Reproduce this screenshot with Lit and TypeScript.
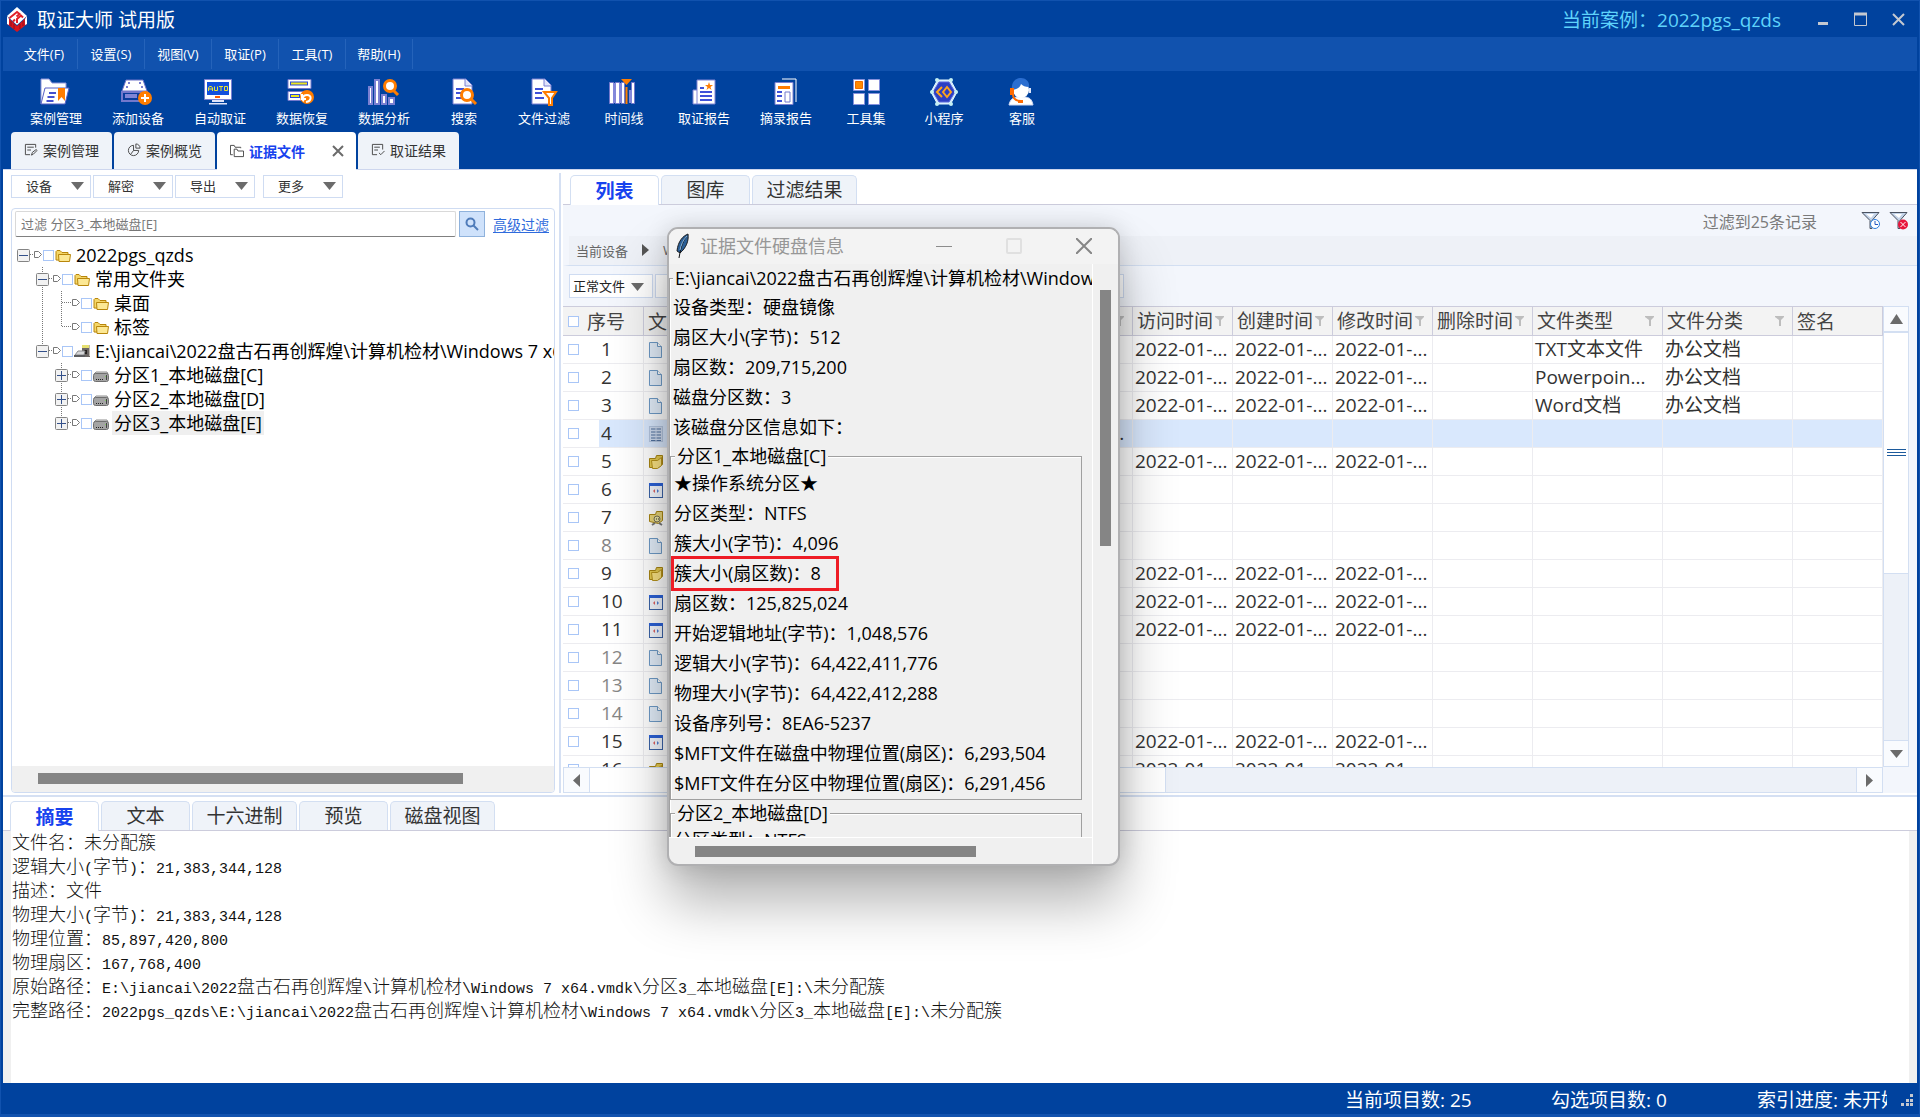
import { LitElement, html, svg, css, nothing, TemplateResult } from "lit";
import { customElement } from "lit/decorators.js";
import { classMap } from "lit/directives/class-map.js";

/* ---------- Toolbar icons, 30 x 28 ---------- */
const toolIcons: Record<string, TemplateResult> = {
  folder: svg`<path d="M0 26V1h8l3 4h14v5" fill="#fff" stroke="#8f95dc"/><path d="M4 10h24l-4 16H0z" fill="#fff" stroke="#5960c4"/><path d="M8 15h7M6.500 19h7M5.500 23h7" stroke="#4450d0" stroke-width="2"/><path d="M17 10h7v13l-3.500-4-3.500 4z" fill="#ff7d00"/>`,
  drive: svg`<g transform="translate(-2 0)"><path d="M5 2h17l4 11H1z" fill="#fff" stroke="#6d72c8"/><path d="M1 14h25v9H1z" fill="#0a3c9c" stroke="#7378cc" stroke-width="2"/><path d="M4 18h12" stroke="#8085d6" stroke-width="4"/><g fill="#4d55c0"><circle cx="8" cy="5" r="1"/><circle cx="19" cy="5" r="1"/><circle cx="6" cy="9" r="1"/><circle cx="21" cy="9" r="1"/></g><circle cx="24" cy="20" r="7" fill="#ff7d00"/><path d="M24 16v8M20 20h8" stroke="#fff" stroke-width="2"/></g>`,
  auto: svg`<g transform="translate(-2 0)"><path d="M1.500 1.500h27v20h-27z" fill="#fff" stroke="#7b80d2"/><path d="M4 4h22v13H4z" fill="#1250dc"/><g stroke="#e8e430" fill="none"><path d="M5.500 13v-3l1-1.500h2l1 1.500v3M5.500 11h4M11.500 8.500v4h3v-4M16 8.500h4M18 8.500V13M21.500 8.500h3v4h-3z"/></g><path d="M12 19h5" stroke="#ff5a00" stroke-width="2"/><path d="M9 22h12v2H9zM6 25h18v1.500H6z" fill="#dfe4fa"/></g>`,
  recover: svg`<g transform="translate(-2 0)"><path d="M3 1.500h23v9H3z" fill="#fff" stroke="#7378cc" stroke-width="1"/><path d="M5 5.500h18" stroke="#2c48d8" stroke-width="4"/><path d="M6 5.500h16" stroke="#eee71e" stroke-width="2"/><path d="M3 13.500h20v9H3z" fill="#fff" stroke="#7378cc" stroke-width="1"/><path d="M5 18h10" stroke="#2c48d8" stroke-width="4"/><path d="M6 18h8" stroke="#eee71e" stroke-width="2"/><circle cx="22" cy="19" r="7" fill="#ff7d00"/><path d="M21 24c6-1 6-7 1-7s-5 5-3 6M17 16v5h4" fill="none" stroke="#fff" stroke-width="2"/></g>`,
  chart: svg`<g transform="translate(-2 0)"><g fill="#fff" stroke="#7b80d2" stroke-width="2"><path d="M2 9h3v17H2zM8 2h4v24H8zM15 17h4v9h-4zM22 20h5v6h-5z"/></g><circle cx="23" cy="8" r="5.500" fill="#fff" stroke="#ff7d00" stroke-width="3"/><path d="m26 12 5 5" stroke="#ff7d00" stroke-width="3"/></g>`,
  search: svg`<path d="M4 1h13l6 6v19H4z" fill="#fff" stroke="#7b80d2"/><path d="M16 1v7h7" fill="#dfe3fa" stroke="#7b80d2"/><path d="M7 11h8M7 15h6M7 20h7" stroke="#3f51d8" stroke-width="2"/><circle cx="18" cy="17" r="5.500" fill="#fff" stroke="#ff7d00" stroke-width="3"/><path d="M22 21l5 5" stroke="#ff7d00" stroke-width="3"/>`,
  filter: svg`<path d="M3 1h13l6 6v19H3z" fill="#fff" stroke="#7b80d2"/><path d="M15 1v7h7" fill="#dfe3fa" stroke="#7b80d2"/><path d="M6 11h8M6 15h7M6 20h9" stroke="#3f51d8" stroke-width="2"/><path d="M15 14h12l-4 6v7h-3v-7z" fill="#fff" stroke="#ff7d00" stroke-width="2"/>`,
  timeline: svg`<g transform="translate(-2 0)"><g fill="#fff" stroke="#7378cc"><path d="M2.500 4.500h4v21h-4zM8.500 4.500h4v21h-4zM14.500 4.500h3v21h-3zM24.500 4.500h3v21h-3z"/></g><path d="M6 5h3v20H6zM12 5h3v20h-3zM22 12h3v13h-3z" fill="#8388da"/><path d="M14 1h11l-5.500 6z" fill="#ff7d00"/><path d="M19.500 9v17" stroke="#ff7d00" stroke-width="2"/></g>`,
  report: svg`<path d="M8 2h18v24H4V12h4z" fill="#fff" stroke="#8085d4"/><path d="M8 12v14" stroke="#8085d4"/><path d="M11 10h4M11 14h12M11 18h12M11 22h12" stroke="#3f51d8" stroke-width="2"/><path d="m20 4 1 3h3l-2.500 2 1 3-2.500-2-2.500 2 1-3L16 7h3z" fill="#ff7d00"/>`,
  excerpt: svg`<path d="M11 1h14v23" fill="none" stroke="#fff" stroke-width="1"/><path d="M4 4.500h18v22H4z" fill="#fff" stroke="#7b80d2"/><path d="M7 9.500h12" stroke="#ff7d00" stroke-width="3"/><path d="M6 14h5M6 18h5M6 23h5" stroke="#3f51d8" stroke-width="2"/><path d="M14 14h5v10h-5z" fill="#fff" stroke="#7378cc"/>`,
  tools: svg`<g fill="#fff" stroke="#8590dc"><path d="M2.500 1.500h11v11h-11zM17.500 1.500h11v11h-11zM2.500 15.500h11v11h-11zM17.500 15.500h11v11h-11z"/></g><path d="M4.500 3.500h7v7h-7z" fill="#ff8a00" stroke="#f06c00"/>`,
  applet: svg`<path d="M8.500 2h13L28 14l-6.500 12h-13L2 14z" fill="#d4eeff" stroke="#e4f6ff" stroke-width="1"/><path d="M10 4h10l6 10-6 10H10L4 14z" fill="#2c3fc4" stroke="#5a68da"/><path d="m13 9-5 5 5 5M14 14l4-5 4 5-4 5z" fill="none" stroke="#ffa41c" stroke-width="2"/><g fill="#c4f0f4"><circle cx="8" cy="2" r="2"/><circle cx="22" cy="2" r="2"/><circle cx="3" cy="14" r="2"/><circle cx="27" cy="14" r="2"/><circle cx="8" cy="26" r="2"/><circle cx="22" cy="26" r="2"/></g>`,
  service: svg`<path d="M2 27c1-6 5-8 9-8h6c5 0 8 2 9 8z" fill="#fff" stroke="#cdd8f4"/><circle cx="14" cy="12" r="8" fill="#fff"/><path d="M5 12C4 3 9 0 14 0s9 4 8 9c-4 0-6-1-8-3-1 4-4 5-9 6z" fill="#2b6ed0"/><path d="M3 10h4v7H3z" fill="#ff6a00"/><path d="M22 10h2v5h-2z" fill="#dfe6fa"/><path d="M6 16c0 5 3 7 8 7" fill="none" stroke="#ff6a00" stroke-width="2"/><path d="M11 22h5v3h-5z" fill="#ff6a00"/>`,
};

/* ---------- Small glyphs ---------- */
const arrowDown = html`<svg class="arrow" width="13" height="8" viewBox="0 0 13 8"><path d="M0 0h13L6.500 8z" fill="#6b6b6b" /></svg>`;
const funnel = html`<svg class="funnel" width="9" height="10" viewBox="0 0 9 10"><path d="M0 0h9v1L6 4v6H4V4L0 1z" fill="#bdbdbd" /></svg>`;

const folderIcon = html`<svg width="16" height="16" viewBox="0 0 16 16"><path d="M1 12V3.500l1-1h3l2 2h6v8z" fill="#f4d668" stroke="#b8860b" /><path d="M3.500 6.500h12l-1 7H4z" fill="#fce894" stroke="#b8860b" /></svg>`;
const imageIcon = html`<svg width="16" height="16" viewBox="0 0 16 16"><path d="M8 1h8v12H8z" fill="#6b6664" /><path d="M8 1h7v3H8z" fill="#e6e070" /><path d="M10 6h3v4h-3z" fill="#25211f" /><path d="M15 1h1v11h-1z" fill="#bdb8b0" /><path d="m1 11 3-4h7l-1 4z" fill="#d6d7d9" stroke="#8a8b8d" /><path d="M0 11h11v2H0z" fill="#5c5d60" /></svg>`;
const volumeIcon = html`<svg width="16" height="16" viewBox="0 0 16 16"><path d="m1 6 2-2h11l1 2z" fill="#d8d8d8" stroke="#8f8f8f" /><rect x="0.500" y="5.500" width="15" height="8" rx="2" fill="#a4a4a4" stroke="#6f6f6f" /><path d="M3 11.500h7" stroke="#222" stroke-dasharray="1 1" /><path d="M13 7h1v5h-1z" fill="#444" /><path d="M12 8h1v1h-1z" fill="#7fd060" /></svg>`;

const fileIcons: Record<string, TemplateResult> = {
  doc: html`<svg width="16" height="18" viewBox="0 0 16 18"><path d="M1.500 1.500h8l4 4v11h-12z" fill="#e4effb" stroke="#6f9cc8" /><path d="M9.500 1.500v4h4" fill="#fff" stroke="#6f9cc8" /></svg>`,
  cluster: html`<svg width="16" height="18" viewBox="0 0 16 18"><rect x="1.500" y="1.500" width="13" height="15" fill="#cfdcf0" stroke="#b4c6e0" /><path d="M3 4h4.500M8.500 4H13M3 7h4.500M8.500 7H13M3 10h4.500M8.500 10H13M3 13h4.500M8.500 13H13M3 15.500h4.500M8.500 15.500H13" stroke="#51719f" /></svg>`,
  dir: html`<svg width="16" height="18" viewBox="0 0 16 18"><path d="M1.500 14.500v-9h6l1-3h6v9l-4 3z" fill="#e6cb50" stroke="#a98614" /><path d="m4.500 15.500-1-8h6l4-3v8l-4 3z" fill="#fbe484" stroke="#b8941c" /></svg>`,
  exe: html`<svg width="16" height="18" viewBox="0 0 16 18"><rect x="1.500" y="2.500" width="13" height="14" fill="#f4f8ff" stroke="#3c64a8" /><path d="M1 3.500h14" stroke="#2c62d8" stroke-width="3" /><path d="m7 8-2 2 2 2z" fill="#e06060" /><path d="m9 8 2 2-2 2z" fill="#5080d8" /></svg>`,
  lost: html`<svg width="16" height="18" viewBox="0 0 16 18"><path d="M1.500 12.500v-7h6l1-3h6v9l-4 3z" fill="#e8d578" stroke="#a98614" /><circle cx="9" cy="10" r="3" fill="#f0e8a0" stroke="#77715a" /><path d="M8 10h1m1 0h1" stroke="#333" /><path d="m4 16 3-2m4 0 3 2" stroke="#77797c" stroke-width="2" /></svg>`,
};

const tabIcons: Record<string, TemplateResult> = {
  edit: svg`<path d="M12.500 5V1.500h-11v11h5M3.500 4.500h7M3.500 7.500h4M8 13l1-3 4-3 1 1-4 4z"/>`,
  pie: svg`<path d="M7 2.500a5.500 5.500 0 1 0 5.500 5.500H7zM9.500 1v4.500H14C14 3 12 1 9.500 1zM7 8l-3 4"/>`,
  files: svg`<path d="M3 11.500H.500v-10h4l1 2h6v1M4.500 13.500v-8h3l1 2h6v6z"/>`,
  result: svg`<path d="M12.500 7V1.500h-11v11h5M3.500 4.500h6M3.500 7.500h4M8.500 10.500l2 2 4-4"/>`,
};

const menus = ["文件(F)", "设置(S)", "视图(V)", "取证(P)", "工具(T)", "帮助(H)"];

const tools: [string, string][] = [
  ["案例管理", "folder"], ["添加设备", "drive"], ["自动取证", "auto"], ["数据恢复", "recover"],
  ["数据分析", "chart"], ["搜索", "search"], ["文件过滤", "filter"], ["时间线", "timeline"],
  ["取证报告", "report"], ["摘录报告", "excerpt"], ["工具集", "tools"], ["小程序", "applet"], ["客服", "service"],
];

const pageTabs = [
  { label: "案例管理", icon: "edit" },
  { label: "案例概览", icon: "pie" },
  { label: "证据文件", icon: "files", active: true },
  { label: "取证结果", icon: "result" },
];

interface TreeRow {
  label: string;
  depth: number;
  icon: TemplateResult;
  toggle?: "+" | "-";
  trunk?: boolean;
  last?: boolean;
  selected?: boolean;
}

const tree: TreeRow[] = [
  { label: "2022pgs_qzds", depth: 0, icon: folderIcon, toggle: "-", last: true },
  { label: "常用文件夹", depth: 1, icon: folderIcon, toggle: "-" },
  { label: "桌面", depth: 2, icon: folderIcon, trunk: true },
  { label: "标签", depth: 2, icon: folderIcon, trunk: true, last: true },
  { label: "E:\\jiancai\\2022盘古石再创辉煌\\计算机检材\\Windows 7 x64.vmdk", depth: 1, icon: imageIcon, toggle: "-", last: true },
  { label: "分区1_本地磁盘[C]", depth: 2, icon: volumeIcon, toggle: "+" },
  { label: "分区2_本地磁盘[D]", depth: 2, icon: volumeIcon, toggle: "+" },
  { label: "分区3_本地磁盘[E]", depth: 2, icon: volumeIcon, toggle: "+", last: true, selected: true },
];

interface FileRow {
  icon: string;
  dated?: boolean;
  type?: string;
  category?: string;
  dim?: boolean;
  selected?: boolean;
}

const files: FileRow[] = [
  { icon: "doc", dated: true, type: "TXT文本文件", category: "办公文档" },
  { icon: "doc", dated: true, type: "Powerpoin...", category: "办公文档" },
  { icon: "doc", dated: true, type: "Word文档", category: "办公文档" },
  { icon: "cluster", selected: true },
  { icon: "dir", dated: true },
  { icon: "exe" },
  { icon: "lost" },
  { icon: "doc", dim: true },
  { icon: "dir", dated: true },
  { icon: "exe", dated: true },
  { icon: "exe", dated: true },
  { icon: "doc", dim: true },
  { icon: "doc", dim: true },
  { icon: "doc", dim: true },
  { icon: "exe", dated: true },
  { icon: "dir", dated: true },
];

const details = [
  "文件名：未分配簇",
  "逻辑大小(字节)：21,383,344,128",
  "描述：文件",
  "物理大小(字节)：21,383,344,128",
  "物理位置：85,897,420,800",
  "物理扇区：167,768,400",
  "原始路径：E:\\jiancai\\2022盘古石再创辉煌\\计算机检材\\Windows 7 x64.vmdk\\分区3_本地磁盘[E]:\\未分配簇",
  "完整路径：2022pgs_qzds\\E:\\jiancai\\2022盘古石再创辉煌\\计算机检材\\Windows 7 x64.vmdk\\分区3_本地磁盘[E]:\\未分配簇",
];

const diskLines = ["设备类型：硬盘镜像", "扇区大小(字节)：512", "扇区数：209,715,200", "磁盘分区数：3", "该磁盘分区信息如下："];
const partitionLines = [
  "★操作系统分区★",
  "分区类型：NTFS",
  "簇大小(字节)：4,096",
  "簇大小(扇区数)：8",
  "扇区数：125,825,024",
  "开始逻辑地址(字节)：1,048,576",
  "逻辑大小(字节)：64,422,411,776",
  "物理大小(字节)：64,422,412,288",
  "设备序列号：8EA6-5237",
  "$MFT文件在磁盘中物理位置(扇区)：6,293,504",
  "$MFT文件在分区中物理位置(扇区)：6,291,456",
];

const base = css`
  :host, *, *::before, *::after { box-sizing: border-box; }
  button, input, select { font: inherit; color: inherit; margin: 0; }
  button { border: 0; background: none; padding: 0; white-space: nowrap; }
  svg { display: block; flex: none; }
  .check {
    appearance: none; flex: none; width: 11px; height: 11px;
    border: 1px solid #a9c6f7; background: #fff;
  }
`;

/** Device tree with its filter box. */
@customElement("device-tree")
export class DeviceTree extends LitElement {
  static styles = [base, css`
    :host { display: flex; flex-direction: column; min-width: 0; padding: 5px 4px 2px 8px; }
    .actions { display: flex; gap: 2px; height: 23px; margin-bottom: 10px; }
    .action {
      display: flex; align-items: center; justify-content: space-between; width: 80px; line-height: 20px;
      padding: 0 6px 1px 14px; border: 1px solid #cfdcf2; background: #fff; font-size: 13px; color: #333;
    }
    .more { margin-left: 6px; }
    .box {
      flex: 1; min-height: 0; display: flex; flex-direction: column; overflow: hidden;
      border: 1px solid #cfdcf2; border-radius: 4px;
    }
    .search { display: flex; align-items: center; gap: 3px; padding: 2px 5px 0 3px; height: 28px; }
    .field {
      flex: 1; min-width: 0; height: 26px; border: 1px solid #d9d9d9; border-bottom: 1px solid #808080;
      border-radius: 2px; padding: 0 5px 1px; font-size: 13px; outline: 0; background: #fff;
    }
    .field::placeholder { color: #777; opacity: 1; }
    .go {
      width: 26px; height: 26px; border: 1px solid #8fb2dc; background: #cfe2fb;
      display: flex; align-items: center; justify-content: center;
    }
    .advanced { margin-left: 5px; font-size: 14px; color: #2f6bdc; text-underline-offset: 2px; }
    .tree { flex: 1; min-height: 0; overflow: hidden; margin: 6px 0 0; padding: 0 0 0 5px; list-style: none; font-size: 18px; color: #000; }
    .row { display: flex; align-items: center; height: 24px; line-height: 24px; white-space: nowrap; }
    .label { margin-left: 3px; padding: 0 2px; }
    .selected { background: #efefef; }
    .icon { margin: 2px 0 0 1px; }
    .track { height: 26px; background: #f0f0f0; padding: 7px 91px 0 26px; }
    .thumb { height: 11px; background: #858585; }
  `];

  private guides(row: TreeRow) {
    const cells: TemplateResult[] = [];
    for (let level = 0; level < row.depth; level++) {
      cells.push(html`<svg width="19" height="24">${level === 1 && row.trunk ? svg`<path d="M6.500 0v24" stroke="#777" stroke-dasharray="1 1" />` : nothing}</svg>`);
    }
    return cells;
  }

  private node(row: TreeRow) {
    const glyph = html`<svg width="17" height="24">
      ${row.depth > 0 ? svg`<path d="M6.500 0V${row.last ? 12 : 24}" stroke="#777" stroke-dasharray="1 1" />` : nothing}
      <path d="M7 11.500h10" stroke="#777" stroke-dasharray="1 1" />
      ${row.toggle
        ? svg`<rect x="0.500" y="6.500" width="12" height="12" rx="1" fill="#f2f2f2" stroke="#848484" />
            <path d=${row.toggle === "+" ? "M2 12.500h9M6.500 8v9" : "M2 12.500h9"} stroke="#33508a" />`
        : nothing}
    </svg>`;
    return row.toggle ? html`<button aria-label="${row.toggle} ${row.label}">${glyph}</button>` : glyph;
  }

  render() {
    return html`
      <div class="actions">
        ${["设备", "解密", "导出", "更多"].map((t) => html`<button class="action ${t === "更多" ? "more" : ""}">${t}${arrowDown}</button>`)}
      </div>
      <div class="box">
        <div class="search">
          <input class="field" type="text" aria-label="过滤" placeholder="过滤 分区3_本地磁盘[E]" />
          <button class="go" aria-label="过滤">
            <svg width="14" height="14" viewBox="0 0 14 14"><circle cx="5.500" cy="5.500" r="4" fill="none" stroke="#4f7cba" stroke-width="2" /><path d="m8 8 5 5" stroke="#4f7cba" stroke-width="2" /></svg>
          </button>
          <a class="advanced" href="#">高级过滤</a>
        </div>
        <ul class="tree">
          ${tree.map((row) => html`<li class="row">
            ${this.guides(row)}${this.node(row)}
            <svg width="9" height="24"><path d="M.500 8.500h4l3 3-3 3h-4z" fill="#fff" stroke="#777" /></svg>
            <input class="check" type="checkbox" aria-label=${row.label} />
            <span class="icon">${row.icon}</span>
            <span class="label ${row.selected ? "selected" : ""}">${row.label}</span>
          </li>`)}
        </ul>
        <div class="track"><div class="thumb"></div></div>
      </div>`;
  }
}

/** List of files with breadcrumb, filter bar and scroll bars. */
@customElement("file-list")
export class FileList extends LitElement {
  static styles = [base, css`
    :host { display: flex; flex-direction: column; min-width: 0; padding: 0 0 2px; }
    .info { display: flex; align-items: center; justify-content: flex-end; height: 31px; background: #f3f6fc; font-size: 16px; color: #7a7a7a; padding: 0 8px 0 0; gap: 8px; }
    .count { margin-right: 36px; }
    .crumbs { display: flex; align-items: center; gap: 14px; height: 30px; margin: 0; padding: 0 0 1px 7px; background: #eef1f7; border-left: 6px solid #f3f6fc; border-bottom: 1px solid #d3dff2; font-size: 13px; color: #666; }
    .bar { display: flex; gap: 2px; height: 40px; padding: 8px 0 8px 6px; background: #f3f6fc; }
    .pick { position: relative; width: 84px; }
    .select { appearance: none; width: 100%; height: 24px; border: 1px solid #cfdcf2; border-radius: 0; background: #fff; padding: 0 0 0 3px; font-size: 13px; color: #222; outline: 0; }
    .pick .arrow { position: absolute; right: 9px; top: 9px; pointer-events: none; }
    .pattern { width: 469px; height: 24px; border: 1px solid #cfdcf2; background: #fff; outline: 0; }
    .area { flex: 1; min-height: 0; display: grid; grid-template: minmax(0, 1fr) 26px / minmax(0, 1fr) 26px; background: #f3f6fc; padding-right: 8px; }
    .clip { overflow: hidden; background: #fff; }
    table { width: 100%; table-layout: fixed; border-collapse: separate; border-spacing: 0; font-size: 19px; color: #333; }
    .c-no { width: 81px; } .c-path { width: 120px; } .c-time { width: 100px; } .c-type { width: 130px; } .c-sign { width: 90px; }
    th { height: 30px; padding: 0 0 0 4px; text-align: left; font-weight: 400; background: #f3f3f3; border: 1px solid #ccccdc; border-left: 0; color: #444; white-space: nowrap; overflow: hidden; }
    .head { display: flex; align-items: center; line-height: 28px; }
    .narrow .funnel { margin-left: 2px; }
    .wide { justify-content: space-between; padding-right: 8px; }
    td { height: 28px; line-height: 27px; padding: 0 0 0 2px; border-right: 1px solid #ececf0; border-bottom: 1px solid #ececf0; white-space: nowrap; overflow: hidden; }
    .no { display: flex; align-items: center; gap: 22px; padding-left: 3px; height: 27px; }
    .numhead { display: flex; align-items: center; gap: 8px; padding-left: 1px; }
    .name { padding-left: 4px; }
    .path { text-overflow: ellipsis; padding-right: 6px; }
    .dim { color: #868686; }
    .selected td { background: #d9e8fd; }
    .selected .first { background: linear-gradient(90deg, #fff 36px, #d9e8fd 36px); }
    .vbar, .hbar { display: flex; background: #edf1f8; border: 1px solid #d3dff2; }
    .vbar { flex-direction: column; }
    .end { flex: none; display: flex; align-items: center; justify-content: center; background: #f9fbfe; }
    .vbar .end { height: 26px; border-top: 1px solid #d3dff2; }
    .hbar .end { width: 26px; border-left: 1px solid #d3dff2; }
    .vbar .start { border-top: 0; border-bottom: 2px solid #d3dff2; }
    .hbar .start { border-left: 0; border-right: 1px solid #d3dff2; }
    .vthumb { flex: 241; display: flex; align-items: center; justify-content: center; background: #fff; }
    .vrest { flex: 167; border-top: 1px solid #d3dff2; }
    .hthumb { flex: 576; background: #fff; border-right: 1px solid #d3dff2; }
    .hrest { flex: 691; }
  `];

  private head(label: string, wide = false) {
    return html`<th><div class="head ${wide ? "wide" : "narrow"}">${label}${funnel}</div></th>`;
  }

  render() {
    const date = "2022-01-...";
    return html`
      <div class="info">
        <span class="count">过滤到25条记录</span>
        <button aria-label="按时间过滤">
          <svg width="20" height="19" viewBox="0 0 20 19"><path d="M1 1.500h17l-7 8v8H9v-8z" fill="#c3d3e8" stroke="#4a5260" /><path d="M5 3h8l-3 4z" fill="#fff" /><circle cx="14" cy="13" r="4.500" fill="#fff" stroke="#2d7fe0" /><path d="M14 10v3.500h3" fill="none" stroke="#2458c0" /></svg>
        </button>
        <button aria-label="清除过滤">
          <svg width="20" height="19" viewBox="0 0 20 19"><path d="M1 1.500h17l-7 8v8H9v-8z" fill="#c3d3e8" stroke="#4a5260" /><path d="M5 3h8l-3 4z" fill="#fff" /><circle cx="14" cy="13.500" r="5" fill="#e8163c" /><path d="m11.500 11 5 5m0-5-5 5" stroke="#fff" /></svg>
        </button>
      </div>
      <div class="crumbs">
        <span>当前设备</span>
        <svg width="7" height="12" viewBox="0 0 7 12"><path d="M0 0v12l7-6z" fill="#555" /></svg>
        <span>Windows</span>
      </div>
      <div class="bar">
        <div class="pick">
          <select class="select" aria-label="文件状态"><option>正常文件</option></select>
          ${arrowDown}
        </div>
        <input class="pattern" type="text" aria-label="过滤条件" />
      </div>
      <div class="area">
        <div class="clip">
          <table>
            <colgroup>
              <col class="c-no" /><col /><col class="c-path" />
              <col class="c-time" /><col class="c-time" /><col class="c-time" /><col class="c-time" />
              <col class="c-type" /><col class="c-type" /><col class="c-sign" />
            </colgroup>
            <thead>
              <tr>
                <th><div class="numhead"><input class="check" type="checkbox" aria-label="全选" />序号</div></th>
                <th>文件名</th>
                <th><div class="head wide"><span></span>${funnel}</div></th>
                ${["访问时间", "创建时间", "修改时间", "删除时间"].map((t) => this.head(t))}
                ${this.head("文件类型", true)}${this.head("文件分类", true)}
                <th>签名</th>
              </tr>
            </thead>
            <tbody>
              ${files.map((f, i) => html`<tr class=${classMap({ dim: !!f.dim, selected: !!f.selected })}>
                <td class="first"><div class="no"><input class="check" type="checkbox" aria-label="${i + 1}" />${i + 1}</div></td>
                <td class="name">${fileIcons[f.icon]}</td>
                <td class="path">${f.selected ? "2022pgs_qzds\\E:" : nothing}</td>
                <td>${f.dated ? date : nothing}</td>
                <td>${f.dated ? date : nothing}</td>
                <td>${f.dated ? date : nothing}</td>
                <td></td>
                <td>${f.type ?? nothing}</td>
                <td>${f.category ?? nothing}</td>
                <td></td>
              </tr>`)}
            </tbody>
          </table>
        </div>
        <div class="vbar">
          <button class="end start" aria-label="向上"><svg width="13" height="10" viewBox="0 0 13 10"><path d="M0 10h13L6.500 0z" fill="#6b6b6b" /></svg></button>
          <div class="vthumb"><svg width="19" height="8" viewBox="0 0 19 8"><path d="M0 .500h19M0 3.500h19M0 6.500h19" stroke="#1c5a9c" /></svg></div>
          <div class="vrest"></div>
          <button class="end" aria-label="向下">${arrowDown}</button>
        </div>
        <div class="hbar">
          <button class="end start" aria-label="向左"><svg width="7" height="13" viewBox="0 0 7 13"><path d="M7 0v13L0 6.500z" fill="#6b6b6b" /></svg></button>
          <div class="hthumb"></div>
          <div class="hrest"></div>
          <button class="end" aria-label="向右"><svg width="7" height="13" viewBox="0 0 7 13"><path d="M0 0v13l7-6.500z" fill="#6b6b6b" /></svg></button>
        </div>
      </div>`;
  }
}

/** Floating window with the disk information. */
@customElement("disk-dialog")
export class DiskDialog extends LitElement {
  static styles = [base, css`
    :host {
      display: flex; flex-direction: column; width: 453px; height: 639px; overflow: hidden;
      border: 2px solid #b0b0b2; border-radius: 11px; background: #f0f0f0; color: #000; font-size: 18px;
      box-shadow: 0 36px 56px rgba(0, 0, 0, 0.3), 0 0 24px rgba(0, 0, 0, 0.14);
    }
    .caption { flex: none; display: flex; align-items: center; height: 35px; padding: 0 26px 2px 6px; background: #f3f3f3; color: #979797; }
    .title { flex: 1; margin-left: 10px; line-height: 30px; }
    .buttons { display: flex; align-items: center; gap: 54px; }
    .body { flex: 1; min-height: 0; display: grid; grid-template: minmax(0, 1fr) 26px / minmax(0, 1fr) 26px; }
    .pane { overflow: hidden; border-bottom: 1px solid #fff; }
    .vbar { grid-row: 1 / 3; grid-column: 2; border-left: 1px solid #fff; padding: 26px 7px 0 7px; }
    .vthumb { width: 11px; height: 256px; background: #858585; }
    .hbar { padding: 8px 116px 0 26px; }
    .hthumb { height: 11px; background: #858585; }
    fieldset { min-width: 0; margin: 0; padding: 0; border: 1px solid #a0a0a0; box-shadow: inset 1px 1px 0 #fff; }
    legend { padding: 0 2px; white-space: nowrap; background: #f0f0f0; }
    .disk { width: 760px; }
    .disk > legend { height: 29px; line-height: 29px; margin-left: 3px; }
    .part { width: 412px; }
    .part > legend { height: 26px; line-height: 26px; margin-left: 4px; }
    .line { height: 30px; line-height: 29px; padding-left: 3px; white-space: nowrap; }
    .marked { position: relative; }
    .marked::after { content: ""; position: absolute; left: 0; top: -3px; width: 168px; height: 35px; border: 3px solid #ee1c25; }
  `];

  render() {
    return html`
      <div class="caption">
        <svg width="15" height="26" viewBox="0 0 15 26"><path d="M13 1C8 3 3 8 2 18l3 2c6-5 9-12 8-19z" fill="#2b5f96" stroke="#1a1c20" /><path d="M12 3C8 8 6 13 4 25" fill="none" stroke="#0e1014" stroke-width="1" /><path d="M12 3c-4 4-6 9-7 14" fill="none" stroke="#8fb8dc" /></svg>
        <span class="title">证据文件硬盘信息</span>
        <div class="buttons">
          <button aria-label="最小化"><svg width="16" height="16" viewBox="0 0 16 16"><path d="M0 8.500h16" stroke="#8c8c8c" /></svg></button>
          <button aria-label="最大化" disabled><svg width="16" height="16" viewBox="0 0 16 16"><rect x="1" y="1" width="14" height="14" rx="1" fill="none" stroke="#e0e0e0" stroke-width="2" /></svg></button>
          <button aria-label="关闭"><svg width="16" height="16" viewBox="0 0 16 16"><path d="m0 0 16 16M16 0 0 16" stroke="#868686" stroke-width="2" /></svg></button>
        </div>
      </div>
      <div class="body">
        <div class="pane">
          <fieldset class="disk">
            <legend>E:\\jiancai\\2022盘古石再创辉煌\\计算机检材\\Windows 7 x64.vmdk</legend>
            ${diskLines.map((t) => html`<div class="line">${t}</div>`)}
            <fieldset class="part">
              <legend>分区1_本地磁盘[C]</legend>
              ${partitionLines.map((t, i) => html`<div class="line ${i === 3 ? "marked" : ""}">${t}</div>`)}
            </fieldset>
            <fieldset class="part">
              <legend>分区2_本地磁盘[D]</legend>
              <div class="line">分区类型：NTFS</div>
            </fieldset>
          </fieldset>
        </div>
        <div class="vbar"><div class="vthumb"></div></div>
        <div class="hbar"><div class="hthumb"></div></div>
      </div>`;
  }
}

@customElement("app-root")
export class AppRoot extends LitElement {
  static styles = [base, css`
    :host {
      display: flex; flex-direction: column; height: 100vh; overflow: hidden; position: relative;
      background: #00429e; border: 1px solid #1152ae; border-bottom-width: 3px; padding: 0 2px;
      font-family: "Open Sans", "Noto Sans CJK SC", sans-serif; font-size: 13px; color: #fff;
    }
    .titlebar { flex: none; display: flex; align-items: center; height: 36px; padding: 0 12px 0 4px; }
    .apptitle { margin-left: 10px; font-size: 19px; }
    .case { margin-left: auto; font-size: 19px; color: #5fd3fb; }
    .window { display: flex; align-items: center; gap: 25px; margin-left: 36px; }
    .menubar { flex: none; display: flex; height: 34px; padding: 2px 0 2px 8px; background: #1152ae; }
    .menu { width: 67px; padding-bottom: 2px; border-right: 1px solid #2563ba; }
    .toolbar { flex: none; display: flex; height: 61px; padding: 7px 0 0 12px; }
    .tool { display: flex; flex-direction: column; align-items: center; gap: 2px; width: 78px; height: 52px; line-height: 20px; }
    .tool svg { overflow: visible; }
    .tool.long { width: 82px; }
    .pages { flex: none; display: flex; gap: 2px; height: 38px; padding: 0 8px; box-shadow: inset 0 -1px 0 #cdd6ee; }
    .page {
      display: flex; align-items: center; gap: 5px; height: 37px; width: 101px; padding: 0 12px 1px 13px; border-radius: 4px 4px 0 0;
      background: #eff3f9; color: #333; font-size: 14px;
    }
    .page.active { width: 139px; height: 38px; background: #fff; color: #1742ee; font-weight: 700; }
    .close { margin-left: auto; }
    .main { flex: 625 1 0; min-height: 0; display: grid; grid-template-columns: minmax(0, 556fr) 2px minmax(0, 1356fr); background: #fff; }
    .vsplit { background: #d5e0f3; margin: 3px 0 2px; }
    .right { display: flex; flex-direction: column; min-width: 0; min-height: 0; padding-left: 2px; }
    .right file-list { flex: 1; min-height: 0; }
    .hsplit { flex: none; height: 2px; background: #d5e0f3; }
    .tabs { flex: none; display: flex; align-items: flex-end; gap: 2px; height: 35px; padding: 0 7px; border-bottom: 1px solid #ccccdc; }
    .tab {
      width: 89px; height: 29px; border: 1px solid #d3dff2; border-bottom: 0; border-radius: 5px 5px 0 0;
      background: #eff3f9; color: #333; font-size: 19px; line-height: 26px;
    }
    .tab.long { width: 105px; }
    .tab.active { height: 30px; margin-bottom: -1px; background: #fff; color: #1742ee; font-weight: 700; }
    .bottom { flex: 286 1 0; min-height: 0; display: flex; flex-direction: column; background: #fff; }
    .bottom .tabs { height: 34px; }
    .detail { flex: 1; min-height: 0; border: solid #f0f0f0; border-width: 0 8px; padding: 0 1px; font-size: 18px; color: #111; font-weight: 300; }
    .text { margin: 0; height: 24px; line-height: 23px; white-space: pre; overflow: hidden; }
    .half { font: 400 15px "Liberation Mono", monospace; }
    .status { flex: none; display: flex; align-items: center; height: 31px; font-size: 19px; line-height: 26px; padding: 2px 4px 0 0; }
    .cell { width: 206px; white-space: nowrap; overflow: hidden; }
    .cell.first { margin-left: auto; }
    .cell.cut { width: 130px; margin-right: 14px; }
    .floating { position: absolute; left: 666px; top: 226px; }
  `];

  /** Sets half-width runs in the fixed-width face, at half the width of a Chinese character. */
  private mono(line: string) {
    return line.split(/([\x20-\x7e]+)/).map((run) => (/^[\x20-\x7e]/.test(run) ? html`<span class="half">${run}</span>` : run));
  }

  private tabs(labels: string[]) {
    return html`<div class="tabs" role="tablist">
      ${labels.map((t, i) => html`<button role="tab" aria-selected=${i === 0 ? "true" : "false"} class=${classMap({ tab: true, active: i === 0, long: t.length > 3 })}>${t}</button>`)}
    </div>`;
  }

  render() {
    return html`
      <div class="titlebar" lang="zh-CN">
        <svg width="20" height="25" viewBox="0 0 20 25">
          <path d="M0 9.500 10 19l10-9.500V17L10 25 0 17z" fill="#d8141c" />
          <path d="M0 9v8l2 1v-6zM20 9v8l-2 1v-6z" fill="#fff" />
          <path d="M10 0 20 9l-10 9L0 9z" fill="#fff" />
          <path d="M2.500 11 10 5l2.500 2-3 2.500M6 14.500l2-2m2 3.500v-4l4-3.500 2 2" fill="none" stroke="#e02028" stroke-width="2" />
          <path d="M4 14v5M7 17v5M13 17v5M16 14v5" stroke="#90101a" />
        </svg>
        <span class="apptitle">取证大师 试用版</span>
        <span class="case">当前案例：2022pgs_qzds</span>
        <div class="window">
          <button aria-label="最小化"><svg width="12" height="14" viewBox="0 0 12 14"><path d="M1 10h10v3H1z" fill="#c4c8d0" /></svg></button>
          <button aria-label="最大化"><svg width="13" height="14" viewBox="0 0 13 14"><path d="M.500 1.500h12v12H.500z" fill="none" stroke="#c4c8d0" /><path d="M0 2h13" stroke="#c4c8d0" stroke-width="3" /></svg></button>
          <button aria-label="关闭"><svg width="13" height="14" viewBox="0 0 13 14"><path d="m1 2 11 11M12 2 1 13" stroke="#c4c8d0" stroke-width="2" /></svg></button>
        </div>
      </div>
      <nav class="menubar">${menus.map((m) => html`<button class="menu">${m}</button>`)}</nav>
      <div class="toolbar">
        ${tools.map(([label, icon]) => html`<button class=${classMap({ tool: true, long: label.length > 3 })}>
          <svg width="30" height="28" viewBox="0 0 30 28" fill="none">${toolIcons[icon]}</svg>${label}
        </button>`)}
      </div>
      <div class="pages" role="tablist">
        ${pageTabs.map((p) => html`<button role="tab" aria-selected=${p.active ? "true" : "false"} class=${classMap({ page: true, active: !!p.active })}>
          <svg width="14" height="14" viewBox="0 0 15 15" fill="none" stroke="#444">${tabIcons[p.icon]}</svg>${p.label}
          ${p.active ? html`<svg class="close" width="12" height="12" viewBox="0 0 12 12"><path d="m1 1 10 10M11 1 1 11" stroke="#6b6b6b" stroke-width="2" /></svg>` : nothing}
        </button>`)}
      </div>
      <div class="main">
        <device-tree></device-tree>
        <div class="vsplit"></div>
        <div class="right">
          ${this.tabs(["列表", "图库", "过滤结果"])}
          <file-list></file-list>
        </div>
      </div>
      <div class="hsplit"></div>
      <div class="bottom">
        ${this.tabs(["摘要", "文本", "十六进制", "预览", "磁盘视图"])}
        <div class="detail">${details.map((d) => html`<p class="text">${this.mono(d)}</p>`)}</div>
      </div>
      <div class="status">
        <span class="cell first">当前项目数: 25</span>
        <span class="cell">勾选项目数: 0</span>
        <span class="cell cut">索引进度: 未开始</span>
        <svg width="12" height="12" viewBox="0 0 12 12"><path d="M9 0h3v3H9zM5 5h3v3H5zM9 5h3v3H9zM0 9h3v3H0zM5 9h3v3H5zM9 9h3v3H9z" fill="#c4c8d0" /></svg>
      </div>
      <disk-dialog class="floating" role="dialog" aria-label="证据文件硬盘信息"></disk-dialog>`;
  }
}
